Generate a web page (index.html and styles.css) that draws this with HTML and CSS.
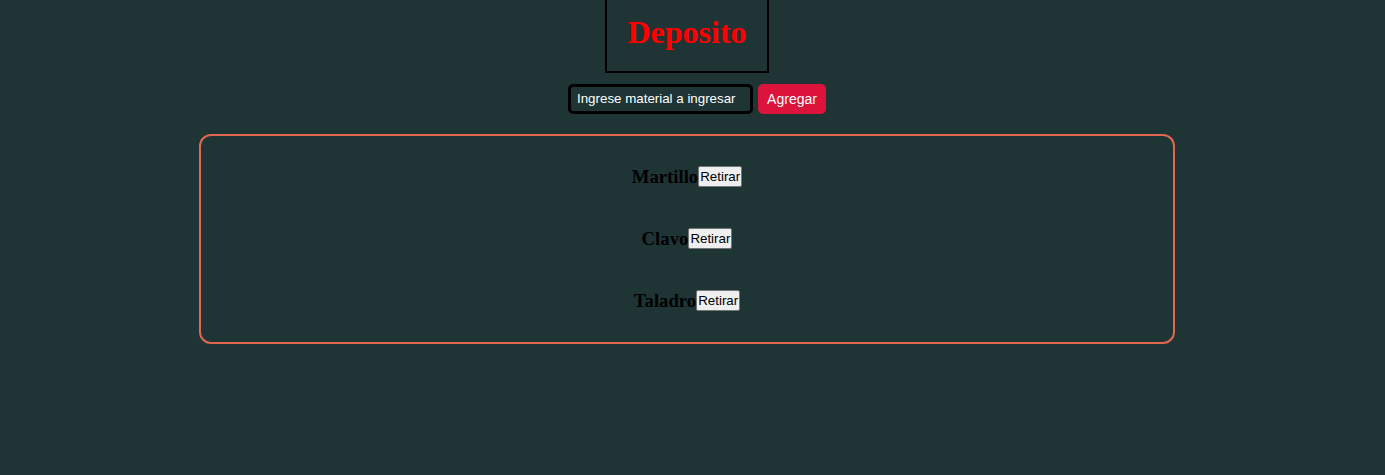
FILE: index.html
```html
<!DOCTYPE html>
<html lang="es">
<head>
<meta charset="utf-8">
<title>Deposito</title>
<link rel="stylesheet" href="styles.css">
</head>
<body>
<div class="page">
  <header class="title-box">
    <h1 class="title">Deposito</h1>
  </header>
  <form class="add-form">
    <input class="add-input" type="text" placeholder="Ingrese material a ingresar">
    <button class="add-btn" type="button">Agregar</button>
  </form>
  <section class="panel">
    <div class="item"><h3 class="item-name">Martillo</h3><button class="remove-btn" type="button">Retirar</button></div>
    <div class="item"><h3 class="item-name">Clavo</h3><button class="remove-btn" type="button">Retirar</button></div>
    <div class="item"><h3 class="item-name">Taladro</h3><button class="remove-btn" type="button">Retirar</button></div>
  </section>
</div>
</body>
</html>
```
FILE: styles.css
```css
html, body {
  margin: 0;
  background: #1e3435;
}
body {
  font-family: "Liberation Serif", "Times New Roman", serif;
}
.page {
  width: 1374px;
  display: flex;
  flex-direction: column;
  align-items: center;
}
.title-box {
  border: 2px solid #000;
  border-top: none;
  padding: 14px 0 20px;
  width: 160px;
  display: flex;
  justify-content: center;
}
.title {
  margin: 0;
  color: #ff0000;
  font-size: 32px;
  font-weight: bold;
  line-height: 36.8px;
}
.add-form {
  margin-top: 11px;
  padding-left: 20px;
  display: flex;
  gap: 5px;
  align-items: center;
}
.add-input {
  box-sizing: border-box;
  width: 185px;
  height: 30px;
  border: 3px solid #000;
  border-radius: 5px;
  background: #1e3435;
  color: #fff;
  padding: 0 6px;
  font-family: "Liberation Sans", Arial, sans-serif;
  font-size: 13.33px;
  outline: none;
}
.add-input::placeholder {
  color: #fff;
  opacity: 1;
}
.add-btn {
  box-sizing: border-box;
  height: 30px;
  width: 68px;
  border: none;
  border-radius: 5px;
  background: #dc143c;
  color: #fff;
  font-family: "Liberation Sans", Arial, sans-serif;
  font-size: 14px;
  padding: 0;
}
.panel {
  box-sizing: border-box;
  width: 976px;
  margin-top: 20px;
  border: 2px solid #e2674f;
  border-radius: 12px;
  padding: 30px 0 30px;
  display: flex;
  flex-direction: column;
  gap: 40px;
}
.item {
  display: flex;
  justify-content: center;
  align-items: center;
  height: 22px;
}
.item-name {
  margin: 0;
  color: #000;
  font-size: 18.72px;
  font-weight: bold;
}
.remove-btn {
  box-sizing: border-box;
  height: 21px;
  padding: 0 1px;
  border: 1px solid #767676;
  border-radius: 2px;
  background: #efefef;
  color: #000;
  font-family: "Liberation Sans", Arial, sans-serif;
  font-size: 13.33px;
}
```
